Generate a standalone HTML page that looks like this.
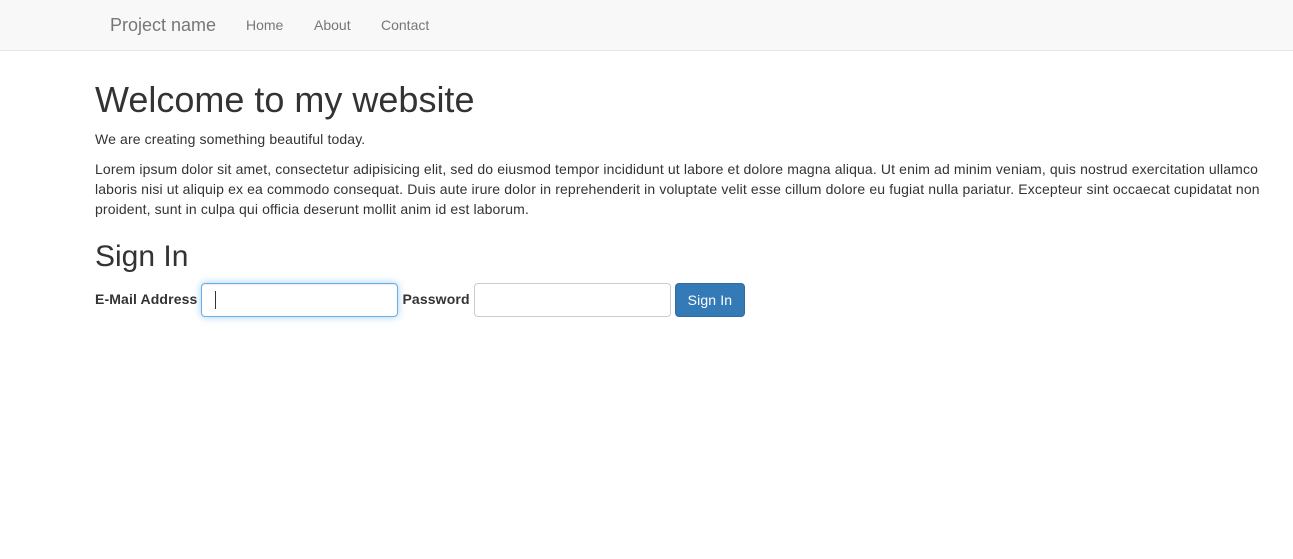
<!DOCTYPE html>
<html><head><meta charset="utf-8"><style>
*{box-sizing:border-box}
body{margin:0;font-family:"Liberation Sans",Helvetica,Arial,sans-serif;font-size:14px;line-height:1.42857;color:#333;background:#fff;width:1293px;height:559px;overflow:hidden}
.nav{height:51px;background:#f8f8f8;border-bottom:1px solid #e7e7e7;position:relative}
.nav span{position:absolute;color:#777}
.brand{font-size:18px;left:110px;top:13px;line-height:24px}
.l{top:15px;line-height:20px}
.c{position:absolute;left:95px;width:1170px;top:51px}
h1{font-size:36px;font-weight:500;line-height:1.1;margin:29px 0 10px}
p{margin:0 0 10px;letter-spacing:0.13px}
h2{font-size:30px;font-weight:500;line-height:1.1;margin:20px 0 10px}
.form{display:flex;align-items:center;height:34px}
label{font-weight:bold;margin-right:4px;letter-spacing:0.13px}
input{height:34px;border:1px solid #ccc;border-radius:4px;width:197px;margin-right:4px;padding:6px 12px;font-size:14px}
.f{position:relative;height:34px;border:1px solid #66afe9;border-radius:4px;width:197px;margin-right:4px;box-shadow:inset 0 1px 1px rgba(0,0,0,.075),0 0 8px rgba(102,175,233,.6)}
.f i{position:absolute;left:13px;top:7px;width:1px;height:18px;background:#333}
button{height:34px;background:#337ab7;border:1px solid #2e6da4;color:#fff;border-radius:4px;padding:6px 12px;font-size:14px;font-family:inherit;letter-spacing:0.13px}
</style></head><body>
<div class="nav"><span class="brand">Project name</span><span class="l" style="left:246px">Home</span><span class="l" style="left:314px">About</span><span class="l" style="left:381px">Contact</span></div>
<div class="c">
<h1>Welcome to my website</h1>
<p>We are creating something beautiful today.</p>
<p>Lorem ipsum dolor sit amet, consectetur adipisicing elit, sed do eiusmod tempor incididunt ut labore et dolore magna aliqua. Ut enim ad minim veniam, quis nostrud exercitation ullamco laboris nisi ut aliquip ex ea commodo consequat. Duis aute irure dolor in reprehenderit in voluptate velit esse cillum dolore eu fugiat nulla pariatur. Excepteur sint occaecat cupidatat non proident, sunt in culpa qui officia deserunt mollit anim id est laborum.</p>
<h2>Sign In</h2>
<div class="form"><label>E-Mail Address</label><div class="f"><i></i></div><label>Password</label><input type="password"><button>Sign In</button></div>
</div>
</body></html>
